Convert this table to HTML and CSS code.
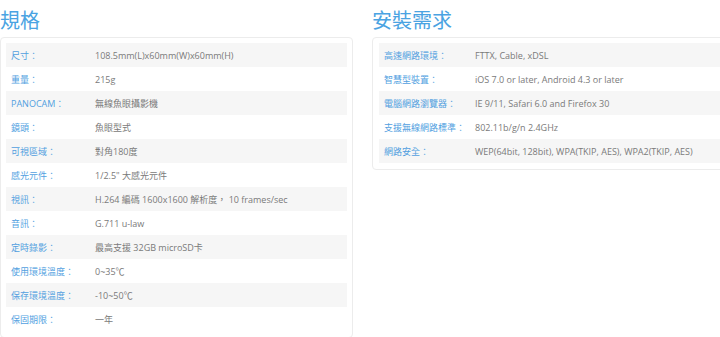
FILE: index.html
```html
<!DOCTYPE html>
<html lang="zh-Hant">
<head>
<meta charset="utf-8">
<link rel="stylesheet" href="styles.css">
</head>
<body>
<div class="page">
  <section class="col col-left">
    <h2 class="title">規格</h2>
    <div class="card">
      <div class="row"><span class="label">尺寸：</span><span class="value">108.5mm(L)x60mm(W)x60mm(H)</span></div>
      <div class="row"><span class="label">重量：</span><span class="value">215g</span></div>
      <div class="row"><span class="label">PANOCAM：</span><span class="value">無線魚眼攝影機</span></div>
      <div class="row"><span class="label">鏡頭：</span><span class="value">魚眼型式</span></div>
      <div class="row"><span class="label">可視區域：</span><span class="value">對角180度</span></div>
      <div class="row"><span class="label">感光元件：</span><span class="value">1/2.5" 大感光元件</span></div>
      <div class="row"><span class="label">視訊：</span><span class="value">H.264 編碼 1600x1600 解析度， 10 frames/sec</span></div>
      <div class="row"><span class="label">音訊：</span><span class="value">G.711 u-law</span></div>
      <div class="row"><span class="label">定時錄影：</span><span class="value">最高支援 32GB microSD卡</span></div>
      <div class="row"><span class="label">使用環境溫度：</span><span class="value">0~35℃</span></div>
      <div class="row"><span class="label">保存環境溫度：</span><span class="value">-10~50℃</span></div>
      <div class="row"><span class="label">保固期限：</span><span class="value">一年</span></div>
    </div>
  </section>
  <section class="col col-right">
    <h2 class="title">安裝需求</h2>
    <div class="card">
      <div class="row"><span class="label">高速網路環境：</span><span class="value">FTTX, Cable, xDSL</span></div>
      <div class="row"><span class="label">智慧型裝置：</span><span class="value">iOS 7.0 or later, Android 4.3 or later</span></div>
      <div class="row"><span class="label">電腦網路瀏覽器：</span><span class="value">IE 9/11, Safari 6.0 and Firefox 30</span></div>
      <div class="row"><span class="label">支援無線網路標準：</span><span class="value">802.11b/g/n 2.4GHz</span></div>
      <div class="row"><span class="label">網路安全：</span><span class="value">WEP(64bit, 128bit), WPA(TKIP, AES), WPA2(TKIP, AES)</span></div>
    </div>
  </section>
</div>
</body>
</html>
```
FILE: styles.css
```css
html, body {
  margin: 0;
  padding: 0;
  background: #ffffff;
  overflow: hidden;
}
body {
  width: 720px;
  height: 337px;
  font-family: "Open Sans", "Noto Sans CJK TC", sans-serif;
}
.page {
  display: flex;
  gap: 19px;
  width: 760px;
}
.col {
  width: 353px;
  flex: none;
}
.col-right {
  width: 360px;
}
.title {
  margin: 0;
  padding-top: 6px;
  height: 28px;
  line-height: 28px;
  font-size: 20px;
  font-weight: normal;
  color: #4aa3e2;
  font-family: "Noto Sans CJK TC", sans-serif;
}
.card {
  margin-top: 3px;
  border: 1px solid #ececec;
  border-radius: 4px;
  padding: 5px 5px 6px 5px;
  background: #fff;
}
.col-right .card {
  padding-left: 6px;
}
.row {
  display: grid;
  grid-template-columns: 89px 1fr;
  height: 24px;
  align-items: center;
  font-size: 9px;
  white-space: nowrap;
}
.col-right .row {
  grid-template-columns: 96px 1fr;
}
.row:nth-child(odd) {
  background: #f6f6f6;
}
.label {
  padding-left: 5px;
  color: #529fdf;
}
.value {
  color: #7a7a7a;
}
```
